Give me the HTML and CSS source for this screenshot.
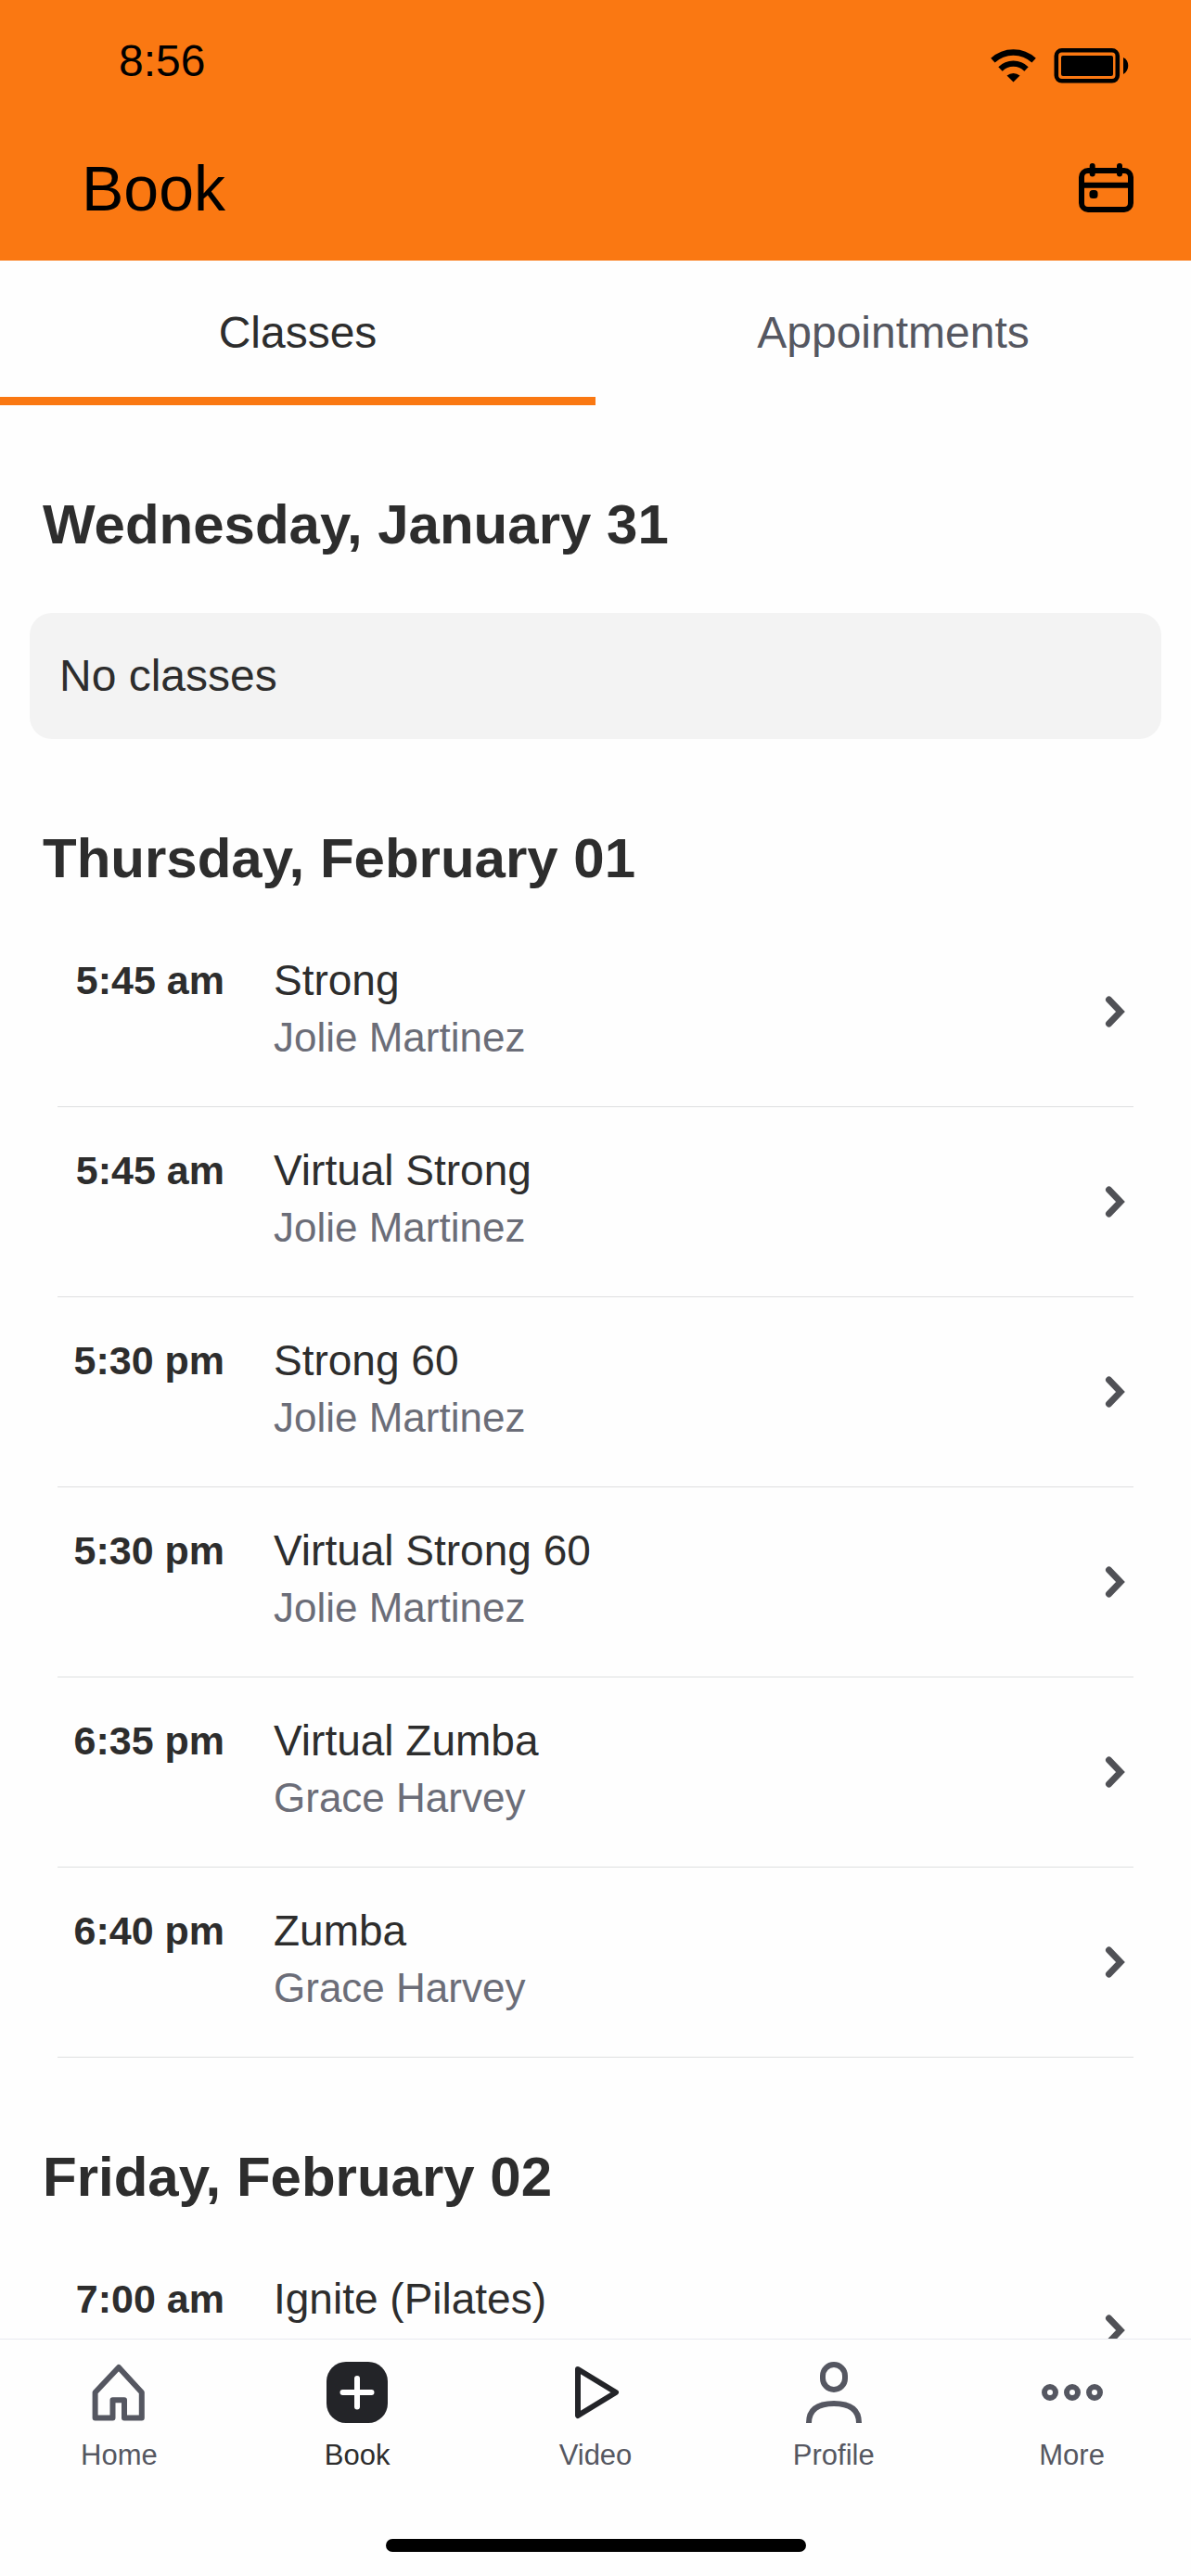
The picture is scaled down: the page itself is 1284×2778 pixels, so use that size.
FILE: index.html
```html
<!DOCTYPE html>
<html lang="en">
<head>
    <meta charset="UTF-8">
    <meta name="viewport" content="width=device-width, initial-scale=1">
    <title>Book</title>
    <link rel="stylesheet" href="styles.css">
</head>
<body>
    <svg class="defs" aria-hidden="true">
        <symbol id="chevron" viewBox="0 0 22 34">
            <path d="M4.5 4L17 17L4.5 30" fill="none" stroke="currentColor" stroke-width="7" stroke-linecap="round"/>
        </symbol>
    </svg>

    <header class="header">
        <div class="status-bar">
            <span>8:56</span>
            <div class="status-icons">
                <svg width="49" height="36" viewBox="0 0 49 36" fill="none" stroke="#000">
                    <path d="M2.4 12.2A32.3 32.3 0 0 1 46.6 12.2" stroke-width="6.4"/>
                    <path d="M10.5 21.5A19.8 19.8 0 0 1 38.5 21.5" stroke-width="6.2"/>
                    <path d="M24.5 35.5L17.5 28.5A10.7 10.7 0 0 1 31.5 28.5Z" fill="#000" stroke="none"/>
                </svg>
                <svg width="81" height="38" viewBox="0 0 81 38">
                    <rect x="2.8" y="2.3" width="66" height="33" rx="6" fill="none" stroke="#000" stroke-width="4.6"/>
                    <rect x="8" y="8" width="56" height="22" rx="2"/>
                    <path d="M75 10C82 13 82 24 75 28Z"/>
                </svg>
            </div>
        </div>
        <div class="title-bar">
            <h1>Book</h1>
            <button class="icon-button" aria-label="Choose date">
                <svg width="59" height="54" viewBox="0 0 59 54" fill="none" stroke="#000" stroke-width="6" stroke-linecap="round">
                    <rect x="3" y="8" width="53" height="42" rx="7"/>
                    <path d="M14.7 3V11.5M44 3V11.5"/>
                    <path d="M3 23.7H56"/>
                    <rect x="11.5" y="29" width="9" height="9" rx="3.5" fill="#000" stroke="none"/>
                </svg>
            </button>
        </div>
    </header>

    <div class="tabs">
        <button class="tab active">Classes</button>
        <button class="tab">Appointments</button>
    </div>

    <main class="schedule">
        <section class="day">
            <h2>Wednesday, January 31</h2>
            <p class="empty">No classes</p>
        </section>

        <section class="day">
            <h2>Thursday, February 01</h2>
            <a class="class-row" href="#">
                <span class="time">5:45 am</span>
                <span class="info">
                    <span class="name">Strong</span>
                    <span class="trainer">Jolie Martinez</span>
                </span>
                <svg class="chevron"><use href="#chevron"/></svg>
            </a>
            <a class="class-row" href="#">
                <span class="time">5:45 am</span>
                <span class="info">
                    <span class="name">Virtual Strong</span>
                    <span class="trainer">Jolie Martinez</span>
                </span>
                <svg class="chevron"><use href="#chevron"/></svg>
            </a>
            <a class="class-row" href="#">
                <span class="time">5:30 pm</span>
                <span class="info">
                    <span class="name">Strong 60</span>
                    <span class="trainer">Jolie Martinez</span>
                </span>
                <svg class="chevron"><use href="#chevron"/></svg>
            </a>
            <a class="class-row" href="#">
                <span class="time">5:30 pm</span>
                <span class="info">
                    <span class="name">Virtual Strong 60</span>
                    <span class="trainer">Jolie Martinez</span>
                </span>
                <svg class="chevron"><use href="#chevron"/></svg>
            </a>
            <a class="class-row" href="#">
                <span class="time">6:35 pm</span>
                <span class="info">
                    <span class="name">Virtual Zumba</span>
                    <span class="trainer">Grace Harvey</span>
                </span>
                <svg class="chevron"><use href="#chevron"/></svg>
            </a>
            <a class="class-row" href="#">
                <span class="time">6:40 pm</span>
                <span class="info">
                    <span class="name">Zumba</span>
                    <span class="trainer">Grace Harvey</span>
                </span>
                <svg class="chevron"><use href="#chevron"/></svg>
            </a>
        </section>

        <section class="day">
            <h2>Friday, February 02</h2>
            <a class="class-row" href="#">
                <span class="time">7:00 am</span>
                <span class="info">
                    <span class="name">Ignite (Pilates)</span>
                </span>
                <svg class="chevron"><use href="#chevron"/></svg>
            </a>
        </section>
    </main>

    <footer class="footer">
        <nav class="nav">
            <a href="#">
                <svg viewBox="0 0 66 66">
                    <path d="M33 6L57.8 33V60.5H39V41.3H26.5V60.5H7.6V33Z"/>
                </svg>
                Home
            </a>
            <a class="current" href="#">
                <svg viewBox="0 0 66 66">
                    <rect class="solid" width="66" height="66" rx="21"/>
                    <path class="plus" d="M33 18V48.5M17.5 33H48.5"/>
                </svg>
                Book
            </a>
            <a href="#">
                <svg class="dark" viewBox="0 0 66 66">
                    <path d="M14 8L55 33L14 58Z"/>
                </svg>
                Video
            </a>
            <a href="#">
                <svg viewBox="0 0 66 66">
                    <rect x="21" y="3" width="24" height="27" rx="12"/>
                    <path class="butt" d="M6 66C6 51 16 45 33 45S60 51 60 66"/>
                </svg>
                Profile
            </a>
            <a href="#">
                <svg viewBox="0 0 66 66">
                    <circle cx="9" cy="33" r="6"/>
                    <circle cx="33" cy="33" r="6"/>
                    <circle cx="57" cy="33" r="6"/>
                </svg>
                More
            </a>
        </nav>
        <div class="home-indicator"></div>
    </footer>
</body>
</html>
```
FILE: styles.css
```css
* {
    box-sizing: border-box;
}
body {
    margin: 0;
    height: 100vh;
    display: flex;
    flex-direction: column;
    font-family: "Liberation Sans", Arial, sans-serif;
    color: #2d2d2d;
    background: #fefefe;
}
svg {
    display: block;
    flex: none;
}
button {
    margin: 0;
    padding: 0;
    border: none;
    background: none;
    font: inherit;
    cursor: pointer;
}
a {
    color: inherit;
    text-decoration: none;
}
.defs {
    display: none;
}

/* header */
.header {
    background: #fa7812;
    color: #000;
}
.status-bar {
    display: flex;
    justify-content: space-between;
    align-items: flex-end;
    padding: 42px 67px 0 128px;
    font-size: 48px;
    line-height: 48px;
}
.status-icons {
    display: flex;
    align-items: center;
    gap: 19px;
}
.title-bar {
    display: flex;
    justify-content: space-between;
    align-items: center;
    padding: 75px 62px 40px 88px;
}
.title-bar h1 {
    margin: 0;
    font-size: 68px;
    line-height: 76px;
    font-weight: normal;
}

/* tabs */
.tabs {
    display: flex;
}
.tab {
    flex: 1;
    padding: 50px 0 41px;
    border-bottom: 9px solid transparent;
    font-size: 48px;
    line-height: 56px;
    color: #555761;
}
.tab.active {
    color: #2d2d2d;
    border-bottom-color: #fa7812;
}

/* schedule */
.schedule {
    flex: 1;
    min-height: 0;
    overflow-y: auto;
    scrollbar-width: none;
}
.day {
    padding: 93px 62px 0;
}
.day h2 {
    margin: 0 -16px 27px;
    font-size: 60px;
    line-height: 72px;
}
.empty {
    margin: 59px -30px 0;
    padding: 40px 32px;
    border-radius: 24px;
    background: #f3f3f3;
    font-size: 48px;
    line-height: 56px;
}
.class-row {
    display: flex;
    align-items: flex-start;
    gap: 53px;
    min-height: 205px;
    padding: 37px 9px 0 0;
    border-bottom: 1px solid #dedfe0;
    line-height: 62px;
}
.time {
    width: 180px;
    text-align: right;
    font-size: 43px;
    font-weight: bold;
}
.info {
    flex: 1;
    display: flex;
    flex-direction: column;
}
.name {
    font-size: 46px;
}
.trainer {
    font-size: 44px;
    color: #6b6d78;
}
.chevron {
    width: 22px;
    height: 34px;
    margin-top: 48px;
    color: #505156;
}

/* bottom navigation */
.footer {
    border-top: 1px solid #e8e9f0;
    padding: 24px 0 26px;
}
.nav {
    display: flex;
}
.nav a {
    flex: 1;
    display: flex;
    flex-direction: column;
    align-items: center;
    gap: 17px;
    font-size: 31px;
    line-height: 36px;
    color: #555761;
}
.nav a.current {
    color: #2d2d2d;
}
.nav svg {
    width: 66px;
    height: 66px;
    fill: none;
    stroke: currentColor;
    stroke-width: 6;
    stroke-linejoin: round;
    stroke-linecap: round;
}
.nav .dark {
    stroke: #232428;
}
.nav .solid {
    fill: #232428;
    stroke: none;
}
.nav .plus {
    stroke: #fff;
}
.nav .butt {
    stroke-linecap: butt;
}
.home-indicator {
    width: 453px;
    height: 14px;
    margin: 72px auto 0;
    border-radius: 7px;
    background: #000;
}
```
